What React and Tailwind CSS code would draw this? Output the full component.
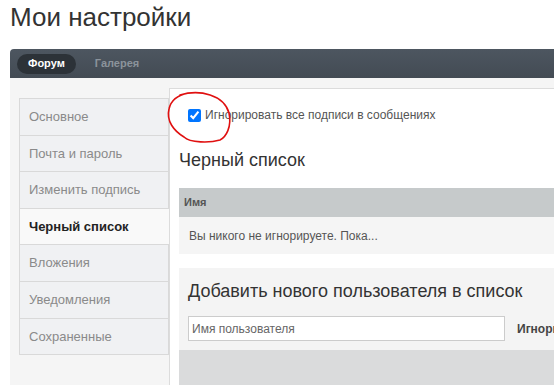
import React from 'react';

const menu = ['Основное', 'Почта и пароль', 'Изменить подпись', 'Черный список', 'Вложения', 'Уведомления', 'Сохраненные'];

export default function App() {
  return (
    <div className="relative w-[554px] h-[385px] overflow-hidden bg-white font-['Liberation_Sans',Arial,sans-serif]">
      {/* Title */}
      <h1 className="h-[49px] pl-[10px] pt-[2px] text-[26px] leading-[30px] text-[#333]">Мои настройки</h1>

      <div className="ml-[10px]">
        {/* Tabs */}
        <div className="h-[29px] flex items-center gap-[19px] pl-[7px] rounded-tl-[4px] bg-gradient-to-b from-[#4d5660] to-[#434b54]">
          <span className="h-[20px] px-[11px] flex items-center rounded-full bg-[#2c3238] text-white text-[11px] font-bold">Форум</span>
          <span className="text-[11px] font-bold text-[#8b939b]">Галерея</span>
        </div>

        {/* Body */}
        <div className="flex h-[307px] bg-[#f5f5f5]">
          <div className="w-[159px] shrink-0 pl-[9px] pt-[20px]">
            <ul className="border-t border-l border-[#d9d9d9]">
              {menu.map((item) => {
                const active = item === 'Черный список';
                return (
                  <li
                    key={item}
                    className={
                      active
                        ? 'h-[36.6px] flex items-center pl-[9px] text-[13px] font-bold text-[#222] bg-[#f9f9f9] border-b border-[#d9d9d9]'
                        : 'h-[36.6px] flex items-center pl-[9px] text-[13px] text-[#8a8a8a] bg-[#f0f1f3] border-b border-r border-[#d9d9d9]'
                    }
                  >
                    {item}
                  </li>
                );
              })}
            </ul>
          </div>

          <div className="flex-1 mt-[10px] bg-white border-t border-l border-[#dcdcdc] pl-[9px]">
            <label className="flex items-center h-[14px] mt-[19px] pl-[9px] gap-[4px] text-[12px] text-[#555]">
              <input type="checkbox" checked readOnly className="m-0 w-[13px] h-[13px]" />
              <span className="whitespace-nowrap">Игнорировать все подписи в сообщениях</span>
            </label>

            <h2 className="mt-[27px] text-[18px] leading-[22px] text-[#333]">Черный список</h2>

            <div className="mt-[17px]">
              <div className="h-[29px] flex items-center pl-[5px] bg-[#c6cacb] text-[11px] font-bold text-[#555]">Имя</div>
              <div className="h-[37px] flex items-center pl-[10px] bg-[#f5f5f5] text-[12px] text-[#555]">Вы никого не игнорируете. Пока...</div>
            </div>

            <div className="mt-[14px] bg-[#f4f4f4]">
              <div className="pl-[9px] pt-[11px] pb-[9px]">
                <h3 className="text-[18px] leading-[24px] text-[#333] whitespace-nowrap">Добавить нового пользователя в список</h3>
                <div className="flex items-center gap-[12px] mt-[13px]">
                  <input
                    placeholder="Имя пользователя"
                    className="w-[317px] h-[25px] shrink-0 px-[3px] bg-white border border-[#cccccc] text-[12px] text-[#555] placeholder:text-[#666] outline-none"
                  />
                  <span className="text-[12px] font-bold text-[#444] whitespace-nowrap">Игнорировать</span>
                </div>
              </div>
              <div className="h-[40px] bg-[#dadbdc]"></div>
            </div>
          </div>
        </div>
      </div>

      {/* hand-drawn red annotation */}
      <svg className="absolute left-[160px] top-[85px]" width="80" height="65" viewBox="0 0 80 65" fill="none">
        <path
          d="M 20 10 C 40 4 64 10 69 28 C 72 42 66 52 60 55 C 50 58 30 58 24 52 C 14 46 6 36 9 24 C 11 15 18 10 28 8"
          stroke="#e01010"
          strokeWidth="1.6"
          strokeLinecap="round"
        />
      </svg>
    </div>
  );
}
